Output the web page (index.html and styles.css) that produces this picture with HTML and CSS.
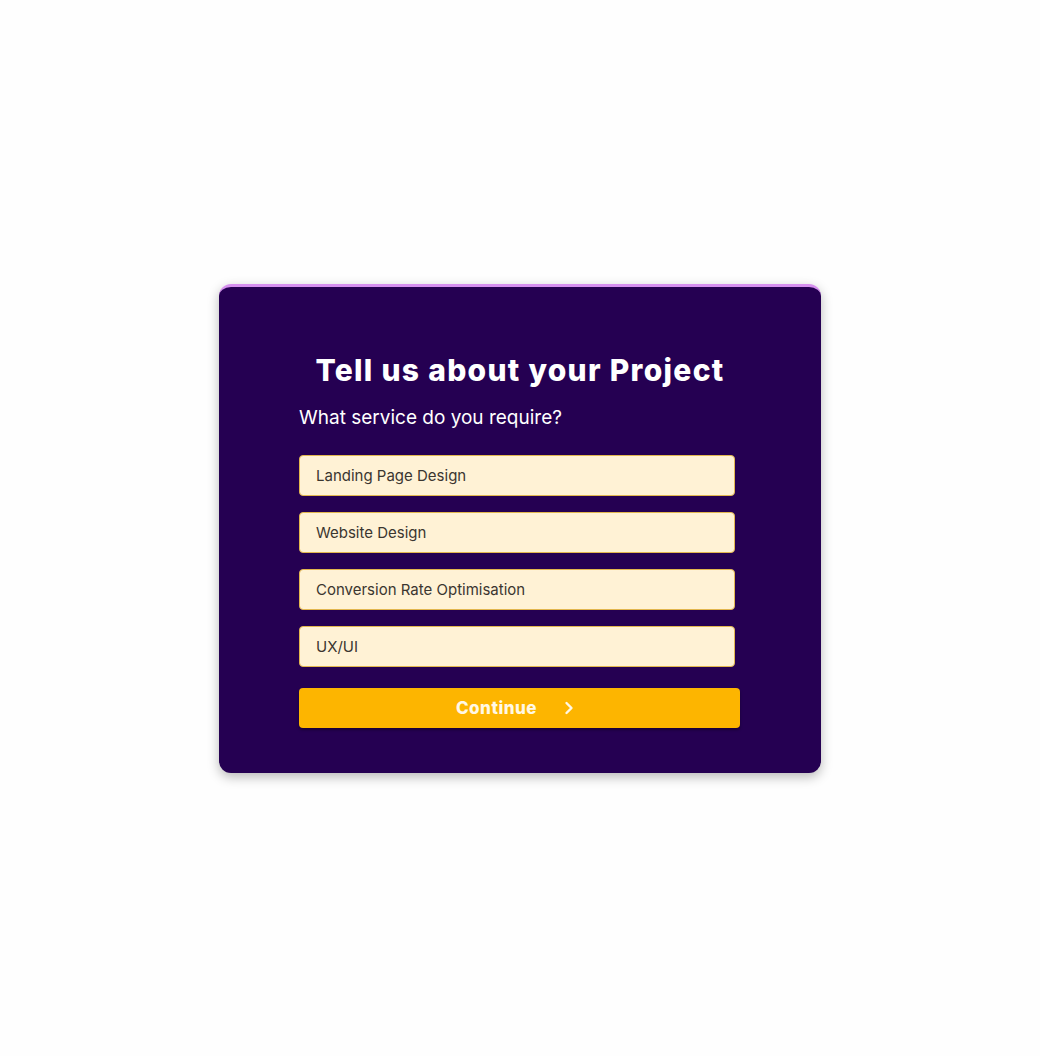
FILE: index.html
```html
<!DOCTYPE html>
<html>
<head>
<meta charset="utf-8">
<link rel="stylesheet" href="styles.css">
</head>
<body>
<div class="page">
  <div class="card">
    <h1 class="title">Tell us about your Project</h1>
    <div class="form">
      <p class="question">What service do you require?</p>
      <div class="option">Landing Page Design</div>
      <div class="option">Website Design</div>
      <div class="option">Conversion Rate Optimisation</div>
      <div class="option">UX/UI</div>
      <button class="continue">
        <span>Continue</span>
        <svg width="12" height="14" viewBox="0 0 12 14"><path d="M3.5 2 L8.5 7 L3.5 12" fill="none" stroke="#fff8e6" stroke-width="2.4" stroke-linecap="round" stroke-linejoin="round"/></svg>
      </button>
    </div>
  </div>
</div>
</body>
</html>
```
FILE: styles.css
```css
html, body {
  margin: 0;
  padding: 0;
  background: #fefefe;
}
.page {
  width: 1040px;
  height: 1056px;
  padding-top: 284px;
  box-sizing: border-box;
}
.card {
  margin-left: 219px;
  width: 602px;
  height: 489px;
  box-sizing: border-box;
  background: #250052;
  border-radius: 12px;
  border-top: 3px solid #d690ef;
  box-shadow: 0 4px 12px rgba(0,0,0,0.28);
  padding-top: 64px;
  font-family: "Inter", "Liberation Sans", sans-serif;
}
.title {
  margin: 0;
  text-align: center;
  color: #ffffff;
  font-size: 30px;
  font-weight: 800;
  line-height: 38px;
  letter-spacing: 1.3px;
}
.form {
  margin-left: 80px;
  width: 441px;
  display: flex;
  flex-direction: column;
}
.question {
  margin: 16px 0 0 0;
  color: #ffffff;
  font-size: 19px;
  line-height: 26px;
}
.option {
  margin-top: 16px;
  width: 436px;
  height: 41px;
  box-sizing: border-box;
  background: #fff2d5;
  border: 1px solid #e2b64e;
  border-radius: 4px;
  padding-left: 16px;
  display: flex;
  align-items: center;
  color: #3b3630;
  font-size: 15px;
}
.question + .option {
  margin-top: 24px;
}
.continue {
  margin-top: 21px;
  width: 441px;
  height: 40px;
  border: none;
  border-radius: 4px;
  background: #fdb500;
  box-shadow: 0 2px 3px rgba(0,0,0,0.35);
  display: flex;
  align-items: center;
  justify-content: center;
  gap: 26px;
  padding: 0 8px 0 0;
  color: #fff8e6;
  font-family: "Inter", "Liberation Sans", sans-serif;
  font-size: 17px;
  font-weight: 800;
  letter-spacing: 0.5px;
}
```
